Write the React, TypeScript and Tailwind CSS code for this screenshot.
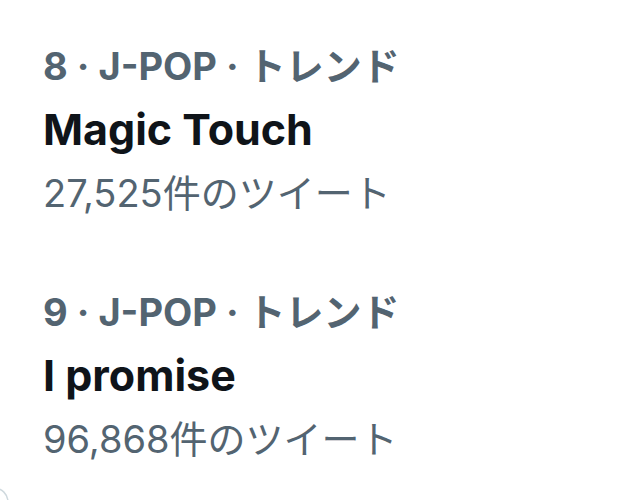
const trends = [
  { rank: 8, category: 'J-POP', title: 'Magic Touch', count: '27,525' },
  { rank: 9, category: 'J-POP', title: 'I promise', count: '96,868' },
]

export default function App() {
  return (
    <div
      className="relative w-[629px] h-[500px] overflow-hidden bg-white"
      style={{ fontFamily: 'Inter, "Noto Sans CJK JP", sans-serif' }}
    >
      <div className="flex flex-col gap-[56px] pl-[43px] pt-[35px]">
        {trends.map(t => (
          <div key={t.rank} className="flex flex-col">
            <div className="text-[38px] leading-[62px] font-bold text-[#536471] whitespace-nowrap">
              {t.rank} · {t.category} · トレンド
            </div>
            <div className="text-[43px] leading-[64px] font-bold text-[#0f1419] whitespace-nowrap">
              {t.title}
            </div>
            <div className="text-[38px] leading-[64px] text-[#536471] whitespace-nowrap">
              {t.count}件のツイート
            </div>
          </div>
        ))}
      </div>

      {/* partial circle at bottom-left */}
      <svg className="absolute left-0 top-[480px]" width="20" height="20" viewBox="0 0 20 20">
        <circle cx="-6" cy="22" r="14" fill="none" stroke="#cfd9de" strokeWidth="1.5" />
      </svg>
    </div>
  )
}
